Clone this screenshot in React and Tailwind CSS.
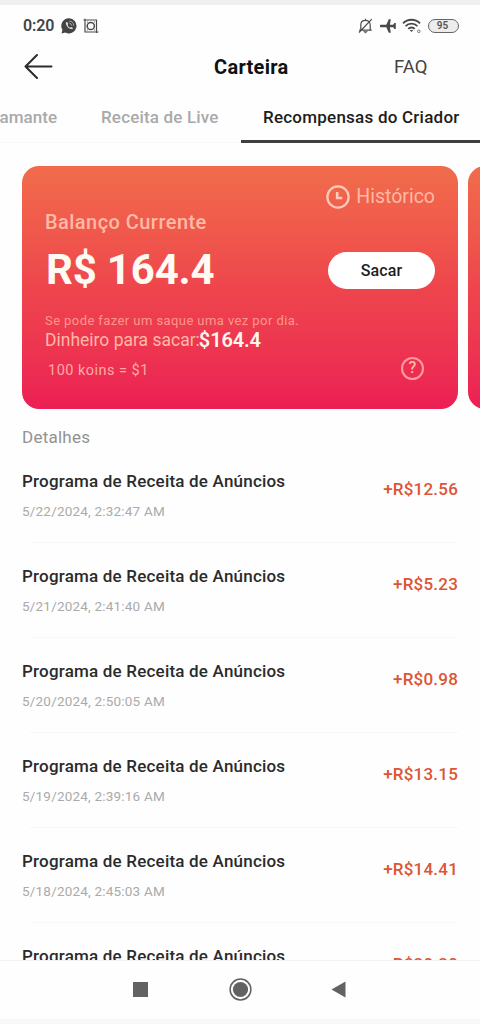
import React from "react";

const entries = [
  { date: "5/22/2024, 2:32:47 AM", amount: "+R$12.56" },
  { date: "5/21/2024, 2:41:40 AM", amount: "+R$5.23" },
  { date: "5/20/2024, 2:50:05 AM", amount: "+R$0.98" },
  { date: "5/19/2024, 2:39:16 AM", amount: "+R$13.15" },
  { date: "5/18/2024, 2:45:03 AM", amount: "+R$14.41" },
  { date: "5/17/2024, 2:38:22 AM", amount: "+R$20.20" },
];

function StatusBar() {
  return (
    <div className="flex h-10 shrink-0 items-center pl-[23px] pr-[21px] pt-px text-[#4a4a4a]">
      <span className="w-[38px] text-base font-semibold leading-5 tracking-[-0.1px] text-[#444]">0:20</span>
      <svg width="16" height="16" viewBox="0 0 16 16">
        <path d="M8 .3a7.6 7.6 0 1 1-3.7 14.3L.6 15.5l.8-3.7A7.6 7.6 0 0 1 8 .3z" fill="#444" />
        <path d="M5.1 4.1c-.8 1.4.5 3.9 1.7 5.1s3.600 2.400 4.900 1.500c.6-.5-.1-1.200-1.500-1.700l-1 .7C8.200 9.200 7 8 6.600 6.900l.7-.9c-.5-1.400-1.300-2.500-2.200-1.900z" fill="#ddd" />
        <path d="M8.200 3.200a4.600 4.600 0 0 1 4.500 4.500M8.300 5.200a2.600 2.600 0 0 1 2.400 2.400" fill="none" stroke="#bbb" strokeWidth=".8" />
      </svg>
      <svg width="16" height="16" viewBox="0 0 16 16" fill="none" stroke="#4a4a4a" strokeWidth="1.200" className="ml-[6px]">
        <path d="M.5 2h13v13M2 .8V14h13.500" />
        <circle cx="7.800" cy="8" r="3.600" strokeWidth="1.500" />
        <path d="M4 4h.8M11 4h.8M4 12h.8M11 12h.8" />
      </svg>
      <div className="ml-auto flex items-center">
        <svg width="15" height="16" viewBox="0 0 15 16" fill="none" stroke="#4a4a4a" strokeWidth="1.200">
          <path d="M1.200 12.200h12.500M2.800 12V7.100c0-3 1.900-4.800 4.700-4.800s4.700 1.800 4.700 4.800V12M7.500.8v1.500M1 14.500 13.800 1.200" />
          <path d="M5.500 13.500h4L7.500 15z" fill="#4a4a4a" strokeWidth=".4" />
        </svg>
        <svg width="16" height="14" viewBox="0 0 16 14" fill="#4a4a4a" className="ml-[7px]">
          <path d="M.8 5.700h5.500L8.800.2h2L9.900 5.700h3.300L14.400 4h1.400v6h-1.400l-1.200-1.700H9.900l.9 5.500h-2L6.300 8.300H.8a1.300 1.300 0 0 1 0-2.600z" />
        </svg>
        <svg width="20" height="16" viewBox="0 0 20 16" fill="none" stroke="#4a4a4a" strokeWidth="1.900" className="ml-[6px]">
          <path d="M1 5.300a12 12 0 0 1 17 0M3.600 8.100a8.300 8.300 0 0 1 11.800 0M6.300 10.800a4.500 4.500 0 0 1 6.400 0" />
          <path d="M7.600 12.100h3.800L9.500 14z" fill="#4a4a4a" stroke="none" />
          <circle cx="16.800" cy="13.300" r="1.300" stroke="#777" strokeWidth="1" />
        </svg>
        <div className="ml-[6px] flex h-[14px] w-[31px] items-center justify-center rounded-full border-[1.500px] border-[#666] bg-[#ececec] text-[10px] font-semibold leading-none text-[#555]">
          <span className="pr-0.5">95</span>
        </div>
      </div>
    </div>
  );
}

function Header() {
  return (
    <header className="grid h-[47px] shrink-0 grid-cols-[214px_180px_1fr] items-center pb-1 text-[#111]">
      <svg width="30" height="26" viewBox="0 0 30 26" fill="none" stroke="#2b2b2b" strokeWidth="2" strokeLinecap="round" strokeLinejoin="round" className="mb-0.5 ml-[24px]">
        <path d="M13 2 1.500 13.500 13 25M1.500 13.500H27.500" />
      </svg>
      <h1 className="text-[20px] font-bold leading-6 tracking-[0.300px]">Carteira</h1>
      <span className="text-[18.500px] leading-6 text-[#444]">FAQ</span>
    </header>
  );
}

function Tabs() {
  return (
    <nav className="flex h-[51px] shrink-0 overflow-hidden whitespace-nowrap text-[17px] font-medium leading-6 text-[#a9a9a9]">
      <div className="flex w-[79px] justify-end border-b border-[#f9f9f9] pr-[22px] pt-[13px]">Diamante</div>
      <div className="w-[162px] border-b border-[#f9f9f9] pl-[22px] pt-[13px] tracking-[0.170px]">Receita de Live</div>
      <div className="w-[239px] border-b-[3px] border-[#3f3f3f] pl-[22px] pt-[13px] tracking-[0.230px] text-[#1d1d1d]">Recompensas do Criador</div>
    </nav>
  );
}

function BalanceCard() {
  return (
    <section className="flex h-[243px] w-[436px] shrink-0 flex-col rounded-[17px] bg-linear-to-b from-[#f16c4b] via-[#ee454c] to-[#ec1e54] pl-[23px] pr-[23px] pt-[19px] text-[#ffb9a6]">
      <div className="flex h-6 items-center justify-end">
        <svg width="24" height="24" viewBox="0 0 24 24" fill="none" stroke="#fdc9b9">
          <circle cx="12" cy="12" r="10.600" strokeWidth="2.300" />
          <path d="M11.200 7v6h5" strokeWidth="2.700" />
        </svg>
        <span className="ml-[6px] text-[19.500px] leading-6">Histórico</span>
      </div>
      <div className="mt-px text-[20px] font-medium leading-6 tracking-[0.450px]">Balanço Currente</div>
      <div className="mt-[14px] flex h-[44px] items-center justify-between">
        <span className="pl-px text-[42px] font-bold leading-[44px] tracking-[-0.200px] text-[#fffaf2]">R$ 164.4</span>
        <button className="h-[37px] w-[107px] rounded-full bg-white pt-px text-base font-medium tracking-[0.100px] text-[#1d1d1d]">Sacar</button>
      </div>
      <div className="mt-[21px] h-4 text-[13px] leading-4 tracking-[0.420px] text-[#ff968c]">Se pode fazer um saque uma vez por dia.</div>
      <div className="-mt-px flex h-6 items-center text-[17.500px] leading-6">
        <span>Dinheiro para sacar:</span>
        <span className="-ml-px text-[20px] font-semibold tracking-[-0.150px] text-[#fff5ee]">$164.4</span>
      </div>
      <div className="mt-1 flex h-6 items-center justify-between pl-[3px] pr-[11px]">
        <span className="pt-1.5 text-[14.500px] leading-5 tracking-[0.480px] text-[#ffaaa5]">100 koins = $1</span>
        <div className="flex size-[23px] items-center justify-center rounded-full border-2 border-[#ff9d9e] text-base font-medium leading-none">?</div>
      </div>
    </section>
  );
}

export default function App() {
  return (
    <div className="flex h-[1024px] w-[480px] flex-col overflow-hidden bg-[#fefefe] font-['Roboto',sans-serif]">
      <div className="h-[5px] shrink-0 bg-[#f0f0f0]" />
      <StatusBar />
      <Header />
      <Tabs />
      <div className="mt-[23px] flex shrink-0 gap-[10px] overflow-hidden pl-[22px]">
        <BalanceCard />
        <section className="h-[243px] w-[436px] shrink-0 rounded-[17px] bg-linear-to-b from-[#f16c4b] via-[#ee454c] to-[#ec1e54]" />
      </div>
      <main className="min-h-0 flex-1 overflow-hidden border-b border-[#f3f3f3] px-[22px]">
        <h2 className="mt-4 text-[17px] leading-6 tracking-[0.250px] text-[#929292]">Detalhes</h2>
        {entries.map((entry) => (
          <div key={entry.date}>
            <div className="flex h-[93px] justify-between pt-5">
              <div>
                <div className="text-[17px] font-medium leading-6 tracking-[0.200px] text-[#2b2b2b]">Programa de Receita de Anúncios</div>
                <div className="mt-2 text-[13.500px] leading-5 tracking-[0.200px] text-[#aaa]">{entry.date}</div>
              </div>
              <div className="mt-2 text-[17px] font-medium leading-6 tracking-[0.200px] text-[#dc5535]">{entry.amount}</div>
            </div>
            <div className="mb-px ml-2 h-px bg-[#f7f7f7]" />
          </div>
        ))}
      </main>
      <footer className="flex h-[58px] shrink-0 items-center pb-0.5 pl-[133px]">
        <svg width="15" height="15" viewBox="0 0 15 15"><path d="M0 0h15v15H0z" fill="#626262" /></svg>
        <svg width="23" height="23" viewBox="0 0 23 23" className="ml-[81px]">
          <circle cx="11.500" cy="11.500" r="10.400" fill="none" stroke="#626262" strokeWidth="1.500" />
          <circle cx="11.500" cy="11.500" r="7.600" fill="#626262" />
        </svg>
        <svg width="15" height="17" viewBox="0 0 15 17" className="ml-[79px]"><path d="M14.500.5v16L.5 8.500z" fill="#626262" /></svg>
      </footer>
      <div className="h-[5px] shrink-0 bg-[#f8f8f8]" />
    </div>
  );
}
